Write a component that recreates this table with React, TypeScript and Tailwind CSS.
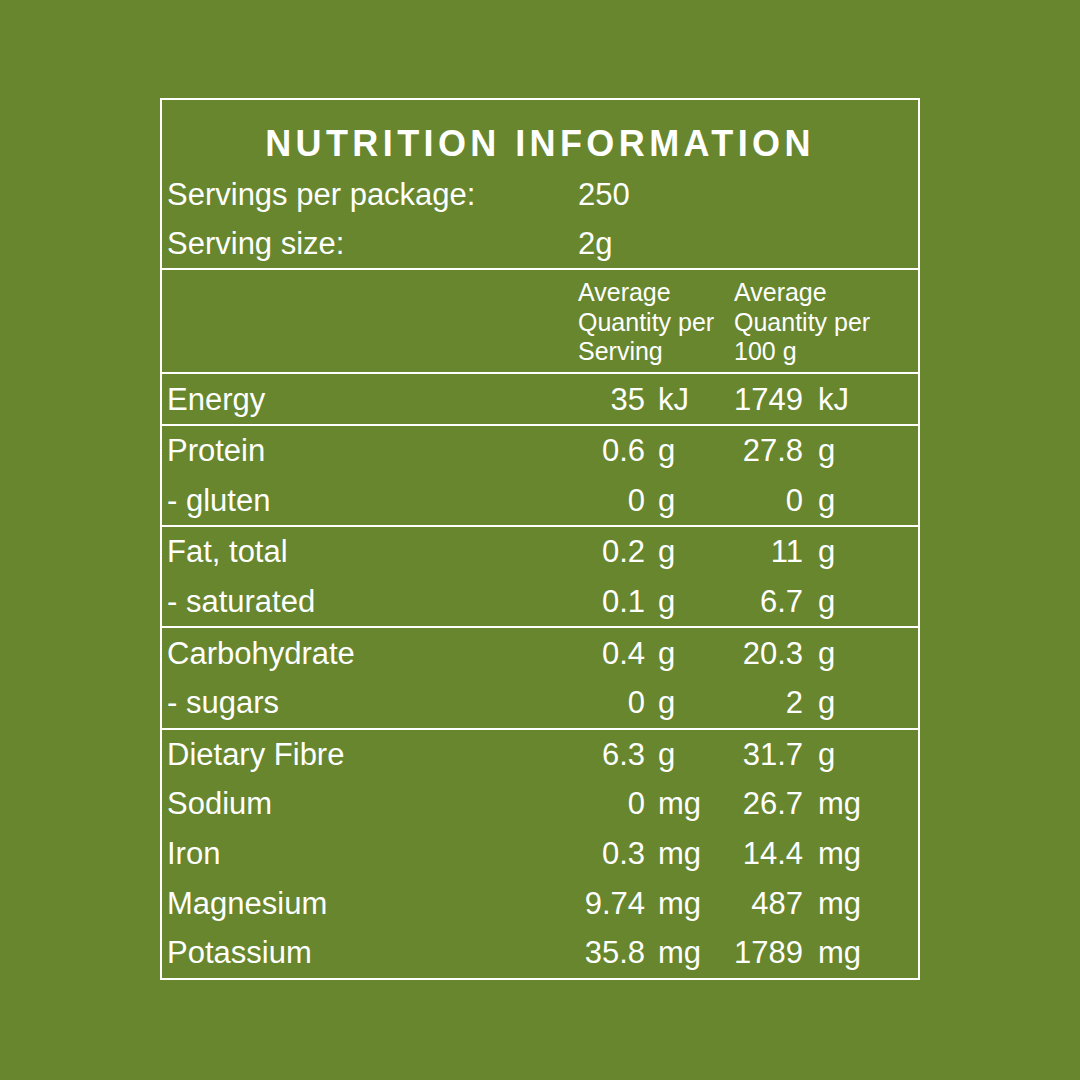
type Row = [string, string, string, string, string];

const groups: Row[][] = [
  [["Energy", "35", "kJ", "1749", "kJ"]],
  [
    ["Protein", "0.6", "g", "27.8", "g"],
    ["- gluten", "0", "g", "0", "g"],
  ],
  [
    ["Fat, total", "0.2", "g", "11", "g"],
    ["- saturated", "0.1", "g", "6.7", "g"],
  ],
  [
    ["Carbohydrate", "0.4", "g", "20.3", "g"],
    ["- sugars", "0", "g", "2", "g"],
  ],
  [
    ["Dietary Fibre", "6.3", "g", "31.7", "g"],
    ["Sodium", "0", "mg", "26.7", "mg"],
    ["Iron", "0.3", "mg", "14.4", "mg"],
    ["Magnesium", "9.74", "mg", "487", "mg"],
    ["Potassium", "35.8", "mg", "1789", "mg"],
  ],
];

function NutrientRow({ row, single }: { row: Row; single?: boolean }) {
  const [label, a, ua, b, ub] = row;
  return (
    <div
      className={`grid grid-cols-[416px_67px_89px_69px_1fr] items-center ${
        single ? "h-[50px]" : "h-[49.6px]"
      }`}
    >
      <span className="pl-[5px]">{label}</span>
      <span className="text-right">{a}</span>
      <span className="pl-[13px]">{ua}</span>
      <span className="text-right">{b}</span>
      <span className="pl-[15px]">{ub}</span>
    </div>
  );
}

export default function App() {
  return (
    <div
      className="min-h-[1080px] w-[1080px] bg-[#67862e] pl-[160px] pt-[98px] text-white"
      style={{ fontFamily: '"Liberation Sans", Arial, sans-serif' }}
    >
      <div className="flex w-[760px] flex-col divide-y-2 divide-white border-2 border-white text-[31px] leading-none">
        <div className="flex h-[170px] flex-col">
          <div className="flex h-[70px] justify-center pt-[17px]">
            <h1 className="text-[36px] font-bold leading-[54px] tracking-[4.4px]">
              NUTRITION INFORMATION
            </h1>
          </div>
          <div className="grid h-[50px] grid-cols-[416px_1fr] items-center">
            <span className="pl-[5px]">Servings per package:</span>
            <span>250</span>
          </div>
          <div className="grid h-[50px] grid-cols-[416px_1fr] items-center">
            <span className="pl-[5px]">Serving size:</span>
            <span>2g</span>
          </div>
        </div>

        <div className="grid h-[104px] grid-cols-[416px_156px_1fr] pt-[8px] text-[25px] leading-[29.5px]">
          <span />
          <span>
            Average
            <br />
            Quantity per
            <br />
            Serving
          </span>
          <span>
            Average
            <br />
            Quantity per
            <br />
            100 g
          </span>
        </div>

        {groups.map((g, i) => (
          <div key={i} className="flex flex-col">
            {g.map((r) => (
              <NutrientRow key={r[0]} row={r} single={g.length === 1} />
            ))}
          </div>
        ))}
      </div>
    </div>
  );
}
